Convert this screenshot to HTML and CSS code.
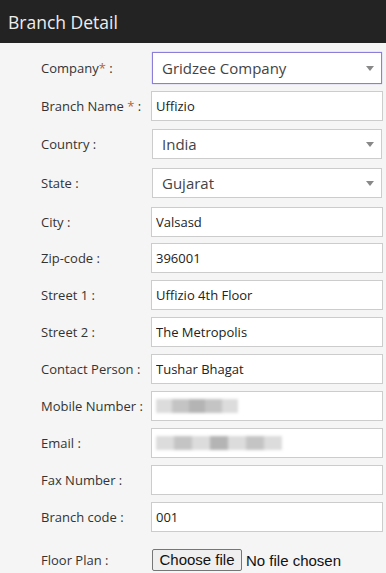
FILE: index.html
```html
<html>
	<head>
		<meta charset="UTF-8">
		<title>Branch Detail</title>
		<link rel="stylesheet" href="styles.css">
	</head>
	<body>
		<div id="header">Branch Detail</div>
		<div class="form">
			<div class="row row-company">
				<label>Company<span class="req">*</span> :</label>
				<div class="select focus"><select><option>Gridzee Company</option></select></div>
			</div>
			<div class="row row-name">
				<label>Branch Name <span class="req">*</span> :</label>
				<input type="text" value="Uffizio">
			</div>
			<div class="row row-sel">
				<label>Country :</label>
				<div class="select"><select><option>India</option></select></div>
			</div>
			<div class="row row-sel">
				<label>State :</label>
				<div class="select"><select><option>Gujarat</option></select></div>
			</div>
			<div class="row row-city">
				<label>City :</label>
				<input type="text" value="Valsasd">
			</div>
			<div class="row">
				<label>Zip-code :</label>
				<input type="text" value="396001">
			</div>
			<div class="row">
				<label>Street 1 :</label>
				<input type="text" value="Uffizio 4th Floor">
			</div>
			<div class="row">
				<label>Street 2 :</label>
				<input type="text" value="The Metropolis">
			</div>
			<div class="row">
				<label>Contact Person :</label>
				<input type="text" value="Tushar Bhagat">
			</div>
			<div class="row">
				<label>Mobile Number :</label>
				<div class="box">
					<div class="blur">
						<span class="b1"></span><span class="b2"></span><span class="b3"></span><span class="b2"></span><span class="b1"></span>
					</div>
				</div>
			</div>
			<div class="row">
				<label>Email :</label>
				<div class="box">
					<div class="blur wide">
						<span class="b1"></span><span class="b2"></span><span class="b1"></span><span class="b3"></span><span class="b1"></span><span class="b2"></span><span class="b1"></span>
					</div>
				</div>
			</div>
			<div class="row">
				<label>Fax Number :</label>
				<input type="text" value="">
			</div>
			<div class="row row-code">
				<label>Branch code :</label>
				<input type="text" value="001">
			</div>
			<div class="row row-file">
				<label>Floor Plan :</label>
				<div class="file">
					<span class="file-btn">Choose file</span>
					<span class="file-name">No file chosen</span>
				</div>
			</div>
		</div>
	</body>
</html>
```

FILE: styles.css
```css
body {
	margin: 0;
	background-color: #f5f5f5;
	font-family: "Open Sans", sans-serif;
}
#header {
	height: 43px;
	background-color: #232323;
	color: #eeeeee;
	font-size: 17.5px;
	line-height: 45px;
	padding-left: 8px;
}
.form {
	padding: 9px 3px 0 41px;
}
.row {
	display: flex;
	align-items: center;
	height: 30px;
	margin-bottom: 7px;
}
.row label {
	width: 110px;
	flex: none;
	font-size: 13px;
	color: #333;
}
.req { color: #b5652f; }
.row-company { height: 32px; margin-bottom: 7px; }
.row-name { margin-bottom: 8px; }
.row-sel { margin-bottom: 9px; }
.row-city { margin-bottom: 6px; }
.row-code { margin-bottom: 17px; }
.row-file { height: 22px; }
.row input[type="text"], .box {
	flex: 1;
	box-sizing: border-box;
	height: 30px;
	border: 1px solid #cccccc;
	background: #ffffff;
	font-family: "Open Sans", sans-serif;
	font-size: 13px;
	color: #222;
	padding: 0 4px;
	margin: 0;
	outline: none;
}
.select {
	flex: 1;
	position: relative;
	height: 100%;
	margin-left: 1px;
	margin-right: 1px;
}
.select select {
	appearance: none;
	-webkit-appearance: none;
	width: 100%;
	height: 100%;
	box-sizing: border-box;
	border: 1px solid #cccccc;
	border-radius: 0;
	background: #ffffff;
	font-family: "Open Sans", sans-serif;
	font-size: 15px;
	color: #444;
	padding: 0 9px;
	outline: none;
}
.select.focus select {
	border: 1px solid #8a80dc;
	box-shadow: 0 0 1px #a9a0ea;
}
.select::after {
	content: "";
	position: absolute;
	right: 8px;
	top: 50%;
	margin-top: -2px;
	border-left: 4px solid transparent;
	border-right: 4px solid transparent;
	border-top: 5px solid #888;
}
.box {
	display: flex;
	align-items: center;
}
.blur {
	display: flex;
	height: 14px;
	width: 82px;
	filter: blur(1.5px);
}
.blur.wide { width: 126px; }
.blur span { flex: 1; }
.b1 { background: #dcdcdc; }
.b2 { background: #c4c4c4; }
.b3 { background: #b4b4b4; }
.file {
	display: flex;
	align-items: center;
	font-family: "Liberation Sans", sans-serif;
	font-size: 15px;
	color: #111;
	margin-left: 1px;
}
.file-btn {
	box-sizing: border-box;
	width: 90px;
	height: 22px;
	line-height: 20px;
	text-align: center;
	background: #efefef;
	border: 1px solid #767676;
	border-radius: 2px;
}
.file-name {
	margin-left: 4px;
}
```
